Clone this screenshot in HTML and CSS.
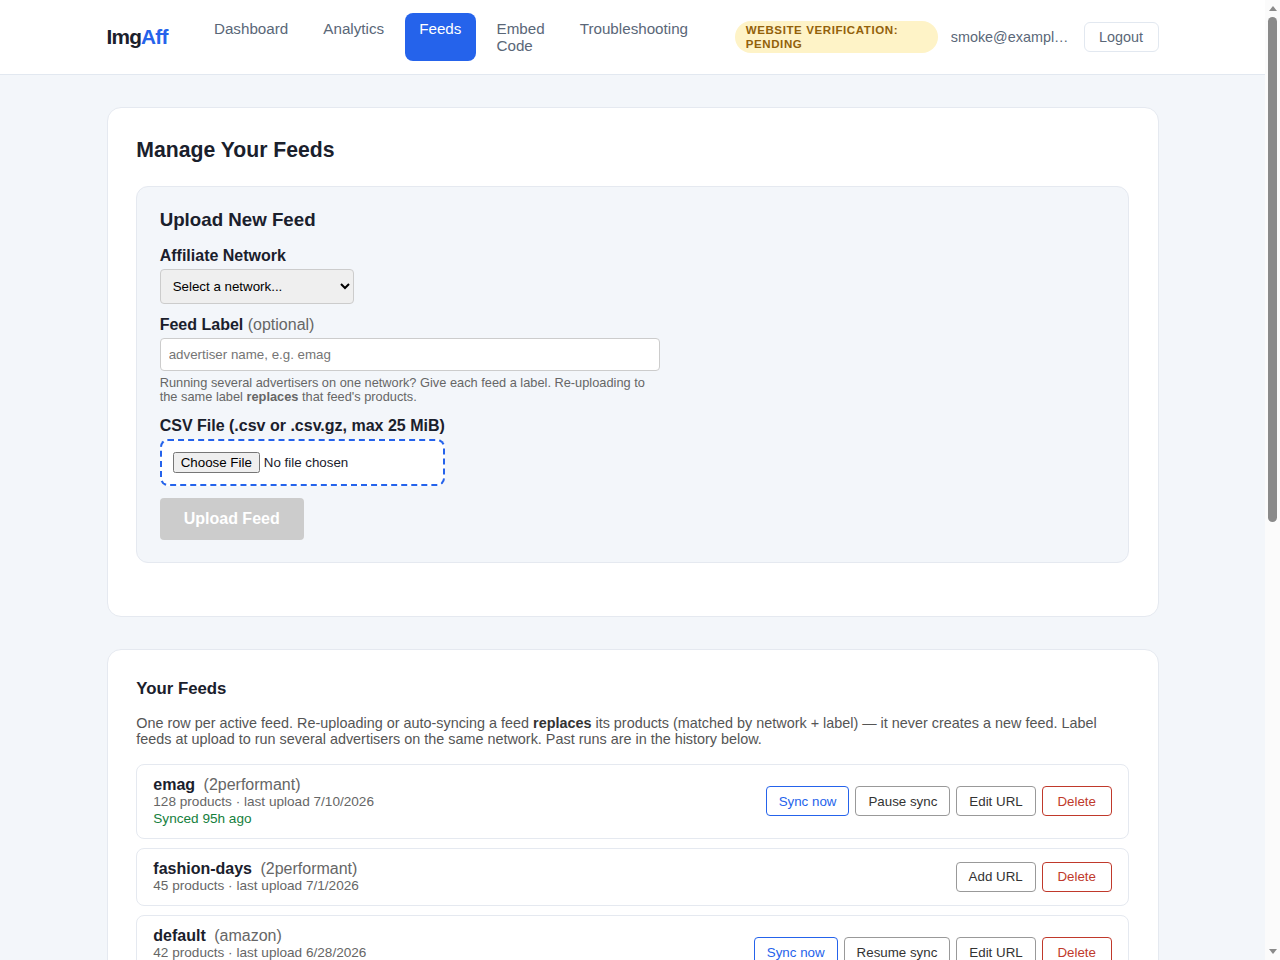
FILE: index.html
```html
<!DOCTYPE html>
<html lang="en">
<head>
    <meta charset="UTF-8">
    <meta name="viewport" content="width=device-width, initial-scale=1.0">
    <title>ImgAff - Feeds</title>
    <link rel="stylesheet" href="styles.css">
</head>
<body>
    <header class="site-header">
        <div class="header-inner">
            <a class="logo" href="#">Img<span class="logo-accent">Aff</span></a>
            <nav class="main-nav">
                <a class="nav-link" href="#">Dashboard</a>
                <a class="nav-link" href="#">Analytics</a>
                <a class="nav-link active" href="#">Feeds</a>
                <a class="nav-link nav-link-wrap" href="#">Embed Code</a>
                <a class="nav-link" href="#">Troubleshooting</a>
            </nav>
            <div class="header-right">
                <span class="verify-badge">Website verification: pending</span>
                <span class="user-email">smoke@example.com</span>
                <button class="logout-btn" type="button">Logout</button>
            </div>
        </div>
    </header>

    <main class="page">
        <section class="card">
            <h1 class="card-title">Manage Your Feeds</h1>
            <div class="upload-box">
                <h2 class="upload-title">Upload New Feed</h2>
                <form>
                    <label class="field-label" for="network">Affiliate Network</label>
                    <select class="network-select" id="network">
                        <option>Select a network...</option>
                        <option>2performant</option>
                        <option>amazon</option>
                    </select>

                    <label class="field-label" for="feed-label">Feed Label <span class="optional">(optional)</span></label>
                    <input class="text-input" id="feed-label" type="text" placeholder="advertiser name, e.g. emag">
                    <p class="help-text">Running several advertisers on one network? Give each feed a label. Re-uploading to the same label <strong>replaces</strong> that feed's products.</p>

                    <label class="field-label" for="csv-file">CSV File (.csv or .csv.gz, max 25 MiB)</label>
                    <div class="file-drop">
                        <input class="file-input" id="csv-file" type="file">
                    </div>
                    <button class="upload-btn" type="button" disabled>Upload Feed</button>
                </form>
            </div>
        </section>

        <section class="card">
            <h2 class="feeds-title">Your Feeds</h2>
            <p class="feeds-intro">One row per active feed. Re-uploading or auto-syncing a feed <strong>replaces</strong> its products (matched by network + label) — it never creates a new feed. Label feeds at upload to run several advertisers on the same network. Past runs are in the history below.</p>

            <div class="feed-row">
                <div class="feed-info">
                    <div class="feed-name"><strong>emag</strong> <span class="feed-network">(2performant)</span></div>
                    <div class="feed-meta">128 products · last upload 7/10/2026</div>
                    <div class="feed-meta synced">Synced 95h ago</div>
                </div>
                <div class="feed-actions">
                    <button class="small-btn sync" type="button">Sync now</button>
                    <button class="small-btn" type="button">Pause sync</button>
                    <button class="small-btn" type="button">Edit URL</button>
                    <button class="small-btn danger" type="button">Delete</button>
                </div>
            </div>

            <div class="feed-row">
                <div class="feed-info">
                    <div class="feed-name"><strong>fashion-days</strong> <span class="feed-network">(2performant)</span></div>
                    <div class="feed-meta">45 products · last upload 7/1/2026</div>
                </div>
                <div class="feed-actions">
                    <button class="small-btn" type="button">Add URL</button>
                    <button class="small-btn danger" type="button">Delete</button>
                </div>
            </div>

            <div class="feed-row">
                <div class="feed-info">
                    <div class="feed-name"><strong>default</strong> <span class="feed-network">(amazon)</span></div>
                    <div class="feed-meta">42 products · last upload 6/28/2026</div>
                    <div class="feed-meta">Sync paused</div>
                </div>
                <div class="feed-actions">
                    <button class="small-btn sync" type="button">Sync now</button>
                    <button class="small-btn" type="button">Resume sync</button>
                    <button class="small-btn" type="button">Edit URL</button>
                    <button class="small-btn danger" type="button">Delete</button>
                </div>
            </div>
        </section>
    </main>

    <!-- browser scrollbar as in the screenshot -->
    <div class="scrollbar">
        <span class="scroll-arrow up"></span>
        <span class="scroll-thumb"></span>
        <span class="scroll-arrow down"></span>
    </div>
</body>
</html>
```

FILE: styles.css
```css
* {
    box-sizing: border-box;
}

body {
    margin: 0;
    padding-right: 15px;
    font-family: "Liberation Sans", Arial, sans-serif;
    background-color: #f3f6fa;
    color: #1a202c;
}

/* Header */
.site-header {
    background-color: #fff;
    border-bottom: 1px solid #e2e8f0;
}

.header-inner {
    max-width: 1100px;
    height: 74px;
    margin: 0 auto;
    padding: 13px 24px;
    display: flex;
    align-items: center;
    gap: 32px;
}

.logo {
    font-size: 20.8px;
    font-weight: bold;
    letter-spacing: -0.8px;
    color: #1a202c;
    text-decoration: none;
}

.logo-accent {
    color: #2563eb;
}

.main-nav {
    display: flex;
    gap: 6.3px;
    align-self: stretch;
}

.nav-link {
    padding: 7px 14.4px;
    border-radius: 8px;
    font-size: 15.2px;
    line-height: 17px;
    color: #5a6778;
    text-decoration: none;
}

.nav-link.active {
    background-color: #2563eb;
    color: #fff;
}

.nav-link-wrap {
    width: min-content;
}

.header-right {
    display: flex;
    align-items: center;
    gap: 13px;
    margin-left: auto;
}

.verify-badge {
    width: 203px;
    padding: 2px 11px;
    border-radius: 16px;
    background-color: #fef3c7;
    color: #92610a;
    font-size: 11.52px;
    line-height: 14px;
    font-weight: bold;
    letter-spacing: 0.6px;
    text-transform: uppercase;
}

.user-email {
    max-width: 119px;
    font-size: 14.4px;
    color: #5a6778;
    white-space: nowrap;
    overflow: hidden;
    text-overflow: ellipsis;
}

.logout-btn {
    height: 30px;
    margin-left: 1px;
    padding: 0 14.4px;
    border: 1px solid #e2e8f0;
    border-radius: 6px;
    background-color: #fff;
    color: #5a6778;
    font-family: inherit;
    font-size: 14.4px;
}

/* Cards */
.page {
    max-width: 1100px;
    min-height: 1693px; /* rest of the page (history) is below the fold */
    margin: 0 auto;
    padding: 32px 24px;
}

.card {
    background-color: #fff;
    border: 1px solid #e5e9f0;
    border-radius: 14px;
    padding: 28.8px;
    margin-bottom: 32px;
}

.card-title {
    margin: 0 0 24.2px;
    font-size: 21.2px;
    line-height: 25px;
}

/* Upload form */
.upload-box {
    background-color: #f3f6fa;
    border: 1px solid #e5e9f0;
    border-radius: 12px;
    padding: 21px 22.4px 22px;
    margin-bottom: 24.2px;
}

.upload-title {
    margin: 0 0 14px;
    font-size: 18.72px;
    line-height: 24px;
}

.field-label {
    display: block;
    margin-bottom: 3px;
    font-size: 16px;
    line-height: 20px;
    font-weight: bold;
}

.optional {
    font-weight: normal;
    color: #666;
}

.network-select {
    display: block;
    width: 194px;
    height: 35px;
    padding: 0 8px;
    margin-bottom: 11px;
    border: 1px solid #ccc;
    border-radius: 4px;
    background-color: #efefef;
    font-family: inherit;
    font-size: 13.33px;
}

.text-input {
    display: block;
    width: 500px;
    height: 33px;
    padding: 8px;
    border: 1px solid #ccc;
    border-radius: 4px;
    font-family: inherit;
    font-size: 13.33px;
}

.help-text {
    width: 500px;
    margin: 5px 0 12px;
    font-size: 12.8px;
    line-height: 14px;
    color: #666;
}

.file-drop {
    width: 285px;
    padding: 11px;
    margin-bottom: 12px;
    border: 2px dashed #2563eb;
    border-radius: 8px;
    background-color: #fff;
}

.file-input {
    display: block;
}

.upload-btn {
    display: block;
    height: 42px;
    padding: 0 24px;
    border: none;
    border-radius: 4px;
    background-color: #ccc;
    color: #fff;
    font-family: inherit;
    font-size: 16px;
    font-weight: bold;
}

/* Feed list */
.feeds-title {
    margin: 0 0 16px;
    font-size: 16.8px;
    line-height: 20px;
}

.feeds-intro {
    margin: 0 0 17px;
    font-size: 14.4px;
    line-height: 16px;
    color: #555;
}

.feeds-intro strong {
    color: #333;
}

.feed-row {
    display: flex;
    justify-content: space-between;
    align-items: center;
    padding: 11.2px 16px 10.8px;
    margin-bottom: 9px;
    border: 1px solid #e5e9f0;
    border-radius: 8px;
}

.feed-name {
    font-size: 16px;
    line-height: 17px;
}

.feed-network {
    margin-left: 4px;
    color: #666;
}

.feed-meta {
    font-size: 13.6px;
    line-height: 17px;
    color: #666;
}

.synced {
    color: #15803d;
}

.feed-actions {
    display: flex;
    gap: 6px;
}

.small-btn {
    height: 30px;
    padding: 0 12px;
    border: 1px solid #999;
    border-radius: 4px;
    background-color: #fff;
    color: #333;
    font-family: inherit;
    font-size: 13.33px;
}

.small-btn.sync {
    border-color: #2563eb;
    color: #2563eb;
}

.small-btn.danger {
    min-width: 70px;
    border-color: #c0392b;
    color: #c0392b;
}

/* Scrollbar */
.scrollbar {
    position: fixed;
    top: 0;
    right: 0;
    bottom: 0;
    width: 15px;
    padding: 6px 0;
    display: flex;
    flex-direction: column;
    align-items: center;
    background-color: #fbfbfb;
}

.scroll-arrow {
    width: 0;
    height: 0;
    border-left: 4.5px solid transparent;
    border-right: 4.5px solid transparent;
}

.scroll-arrow.up {
    border-bottom: 5px solid #8a8a8a;
}

.scroll-arrow.down {
    margin-top: auto;
    border-top: 5px solid #8a8a8a;
}

.scroll-thumb {
    width: 9px;
    height: 505px;
    margin-top: 6px;
    border-radius: 5px;
    background-color: #8a8a8a;
}
```
